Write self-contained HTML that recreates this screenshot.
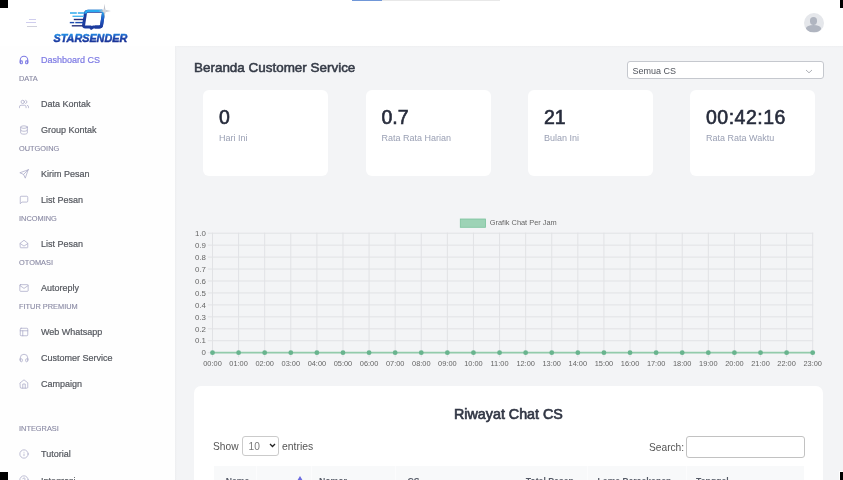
<!DOCTYPE html>
<html><head><meta charset="utf-8">
<style>
*{margin:0;padding:0;box-sizing:border-box}
html,body{width:843px;height:480px;overflow:hidden;background:#f3f4f6;will-change:transform;font-family:"Liberation Sans",sans-serif;position:relative}
.a{position:absolute;white-space:nowrap}
#hdr{position:absolute;left:0;top:0;width:843px;height:46px;background:#fff}
#side{position:absolute;left:0;top:46px;width:175px;height:434px;background:#fefefe}
.it{position:absolute;left:41px;font-size:9px;color:#55585f;-webkit-text-stroke:0.2px currentColor;line-height:10px}
.lb{position:absolute;left:19px;font-size:7.4px;color:#8a8aa4;line-height:8px;font-weight:normal;-webkit-text-stroke:0.12px #8a8aa4;margin-top:0.7px}
.ic{position:absolute;left:19px;width:10px;height:10px;margin-top:-0.5px}
.ic svg{width:10px;height:10px;display:block}
.card{position:absolute;top:89.5px;width:125px;height:86px;background:#fff;border-radius:6px}
.num{position:absolute;left:16px;top:17px;font-size:19.5px;font-weight:normal;color:#262b3b;-webkit-text-stroke:0.6px #262b3b;letter-spacing:0;line-height:20px}
.sub{position:absolute;left:16px;top:43.1px;font-size:9px;color:#9aa0b4;line-height:10px}
.th{top:475.8px;font-size:8.7px;font-weight:bold;color:#555a66;line-height:10px}
.corner{position:absolute;background:#000}
</style></head><body>
<div id="hdr"></div>
<div class="a" style="left:0;top:46px;width:843px;height:2px;background:linear-gradient(#eeeff1,#f3f4f6)"></div>
<div id="side"></div>
<div class="a" style="left:175px;top:46px;width:2px;height:434px;background:linear-gradient(90deg,#edeef0,#f3f4f6)"></div>

<!-- progress bar -->
<div class="a" style="left:352px;top:0;width:148px;height:1px;background:#e8e8e8"></div>
<div class="a" style="left:352px;top:0;width:29.5px;height:1px;background:#7097d8"></div>

<!-- logo -->
<svg class="a" style="left:50px;top:0" width="85" height="46" viewBox="50 0 85 46">
<defs>
<linearGradient id="lg2" x1="0" y1="0" x2="0.15" y2="1"><stop offset="0" stop-color="#22b0f2"/><stop offset="0.3" stop-color="#1f86e0"/><stop offset="0.55" stop-color="#1c4cb4"/><stop offset="1" stop-color="#1a2f92"/></linearGradient>
<linearGradient id="lg3" x1="0" y1="0" x2="0" y2="1"><stop offset="0" stop-color="#2aa9ef"/><stop offset="0.5" stop-color="#1f5cc6"/><stop offset="1" stop-color="#1b3a9e"/></linearGradient>
</defs>
<path d="M88 11.3 L101.6 11.3 Q103.7 11.3 103.4 13.4 L101.6 25 Q101.3 27 99.2 27 L93.2 27 L91.2 28.3 L90.7 27 L85.4 27 Q83.3 27 83.6 25 L85.4 13.4 Q85.8 11.3 88 11.3 Z" fill="#fff" stroke="#1d3c9e" stroke-width="3" stroke-linejoin="round"/>
<path d="M101.6 11.3 Q103.7 11.3 103.4 13.4 L101.6 25 Q101.3 27 99.2 27 L95 27" fill="none" stroke="url(#lg3)" stroke-width="3" stroke-linejoin="round"/>
<path d="M85.9 12.6 Q86.2 10.9 88.2 10.9 L101.8 10.9" fill="none" stroke="#2aaaf0" stroke-width="2.2" stroke-linecap="round"/>
<rect x="70" y="12.3" width="6.8" height="1.4" fill="#22a4ec"/><rect x="77.8" y="12.3" width="7" height="1.4" fill="#22a4ec"/>
<rect x="72.5" y="15.6" width="11.5" height="1.4" fill="#45b4f0"/>
<rect x="73.8" y="18.8" width="10" height="1.4" fill="#24307a"/>
<rect x="69.8" y="21.9" width="4.4" height="1.4" fill="#1d4cb0"/><rect x="75.3" y="21.9" width="8.2" height="1.4" fill="#1d4cb0"/>
<rect x="71.8" y="25.1" width="11.5" height="1.4" fill="#24307c"/>
<path d="M104.5 3.8 L105.4 10.1 L111 11 L105.4 11.9 L104.5 17.8 L103.6 11.9 L98.5 11 L103.6 10.1 Z" fill="#bfc2cb"/>
<circle cx="104.5" cy="11" r="1.8" fill="#d4d6dc"/>
<text x="53.6" y="41.6" font-family="Liberation Sans" font-weight="bold" font-style="italic" font-size="11.7" fill="url(#lg2)" stroke="url(#lg2)" stroke-width="0.5" transform="translate(53.6 0) scale(0.925 1) translate(-53.6 0)">STARSENDER</text>
</svg>

<!-- hamburger -->
<div class="a" style="left:29.2px;top:18.8px;width:7.2px;height:1px;background:#cfcdee"></div>
<div class="a" style="left:25.7px;top:22.4px;width:10.7px;height:1px;background:#cfcdee"></div>
<div class="a" style="left:26.7px;top:26.1px;width:10.2px;height:1px;background:#d0d0dc"></div>

<!-- avatar -->
<div class="a" style="left:803.6px;top:12.8px;width:20.4px;height:20.4px;border-radius:50%;background:#e5e7eb;overflow:hidden">
  <div class="a" style="left:6.2px;top:4.2px;width:7.6px;height:8.2px;border-radius:45%;background:#b0b5c0"></div>
  <div class="a" style="left:2.4px;top:12.6px;width:15.4px;height:6.6px;border-radius:50% 50% 45% 45%;background:#b0b5c0"></div>
</div>

<!-- sidebar items -->
<div class="ic" style="top:55px"><svg viewBox="0 0 24 24" fill="none" stroke="#7d7ae4" stroke-width="2.6" stroke-linecap="round" stroke-linejoin="round"><path d="M3 18v-6a9 9 0 0 1 18 0v6"/><path d="M21 19a2 2 0 0 1-2 2h-1a2 2 0 0 1-2-2v-3a2 2 0 0 1 2-2h3zM3 19a2 2 0 0 0 2 2h1a2 2 0 0 0 2-2v-3a2 2 0 0 0-2-2H3z"/></svg></div>
<div class="it" style="top:55px;color:#7d7ae4">Dashboard CS</div>
<div class="lb" style="top:74px">DATA</div>

<div class="ic" style="top:99px"><svg viewBox="0 0 24 24" fill="none" stroke="#a9a9c6" stroke-width="1.8" stroke-linecap="round" stroke-linejoin="round"><path d="M17 21v-2a4 4 0 0 0-4-4H5a4 4 0 0 0-4 4v2"/><circle cx="9" cy="7" r="4"/><path d="M23 21v-2a4 4 0 0 0-3-3.87M16 3.13a4 4 0 0 1 0 7.75"/></svg></div>
<div class="it" style="top:99px">Data Kontak</div>
<div class="ic" style="top:125px"><svg viewBox="0 0 24 24" fill="none" stroke="#a9a9c6" stroke-width="1.8" stroke-linecap="round" stroke-linejoin="round"><ellipse cx="12" cy="5" rx="8" ry="3"/><path d="M20 12c0 1.66-3.58 3-8 3s-8-1.34-8-3"/><path d="M4 5v14c0 1.66 3.58 3 8 3s8-1.34 8-3V5"/></svg></div>
<div class="it" style="top:125px">Group Kontak</div>
<div class="lb" style="top:144px">OUTGOING</div>

<div class="ic" style="top:169px"><svg viewBox="0 0 24 24" fill="none" stroke="#a9a9c6" stroke-width="1.8" stroke-linecap="round" stroke-linejoin="round"><path d="M22 2L11 13"/><path d="M22 2l-7 20-4-9-9-4 20-7z"/></svg></div>
<div class="it" style="top:169px">Kirim Pesan</div>
<div class="ic" style="top:195px"><svg viewBox="0 0 24 24" fill="none" stroke="#a9a9c6" stroke-width="1.8" stroke-linecap="round" stroke-linejoin="round"><path d="M21 15a2 2 0 0 1-2 2H7l-4 4V5a2 2 0 0 1 2-2h14a2 2 0 0 1 2 2z"/></svg></div>
<div class="it" style="top:195px">List Pesan</div>
<div class="lb" style="top:214px">INCOMING</div>

<div class="ic" style="top:239px"><svg viewBox="0 0 24 24" fill="none" stroke="#a9a9c6" stroke-width="1.8" stroke-linecap="round" stroke-linejoin="round"><path d="M3 10l9-7 9 7v10a1 1 0 0 1-1 1H4a1 1 0 0 1-1-1z"/><path d="M3 11l9 6 9-6"/></svg></div>
<div class="it" style="top:239px">List Pesan</div>
<div class="lb" style="top:258px">OTOMASI</div>

<div class="ic" style="top:283px"><svg viewBox="0 0 24 24" fill="none" stroke="#a9a9c6" stroke-width="1.8" stroke-linecap="round" stroke-linejoin="round"><rect x="2" y="4" width="20" height="16" rx="2"/><path d="M22 6l-10 7L2 6"/></svg></div>
<div class="it" style="top:283px">Autoreply</div>
<div class="lb" style="top:302px">FITUR PREMIUM</div>

<div class="ic" style="top:327px"><svg viewBox="0 0 24 24" fill="none" stroke="#a9a9c6" stroke-width="1.8" stroke-linecap="round" stroke-linejoin="round"><rect x="3" y="3" width="18" height="18" rx="2"/><path d="M3 9h18M9 21V9"/></svg></div>
<div class="it" style="top:327px">Web Whatsapp</div>
<div class="ic" style="top:353px"><svg viewBox="0 0 24 24" fill="none" stroke="#a9a9c6" stroke-width="1.8" stroke-linecap="round" stroke-linejoin="round"><path d="M3 18v-6a9 9 0 0 1 18 0v6"/><path d="M21 19a2 2 0 0 1-2 2h-1a2 2 0 0 1-2-2v-3a2 2 0 0 1 2-2h3zM3 19a2 2 0 0 0 2 2h1a2 2 0 0 0 2-2v-3a2 2 0 0 0-2-2H3z"/></svg></div>
<div class="it" style="top:353px">Customer Service</div>
<div class="ic" style="top:379px"><svg viewBox="0 0 24 24" fill="none" stroke="#a9a9c6" stroke-width="1.8" stroke-linecap="round" stroke-linejoin="round"><path d="M3 9l9-7 9 7v11a2 2 0 0 1-2 2H5a2 2 0 0 1-2-2z"/><path d="M9 22V12h6v10"/></svg></div>
<div class="it" style="top:379px">Campaign</div>
<div class="lb" style="top:424px">INTEGRASI</div>

<div class="ic" style="top:449px"><svg viewBox="0 0 24 24" fill="none" stroke="#a9a9c6" stroke-width="1.8" stroke-linecap="round" stroke-linejoin="round"><circle cx="12" cy="12" r="10"/><path d="M12 16v-4M12 8h.01"/></svg></div>
<div class="it" style="top:449.4px">Tutorial</div>
<div class="ic" style="top:475.4px"><svg viewBox="0 0 24 24" fill="none" stroke="#a9a9c6" stroke-width="1.8" stroke-linecap="round" stroke-linejoin="round"><circle cx="12" cy="12" r="10"/><path d="M9.09 9a3 3 0 0 1 5.83 1c0 2-3 3-3 3"/></svg></div>
<div class="it" style="top:476px">Integrasi</div>

<!-- title -->
<div class="a" style="left:194px;top:61.1px;font-size:13.45px;font-weight:normal;color:#343a46;-webkit-text-stroke:0.55px #343a46;line-height:14px">Beranda Customer Service</div>

<!-- select -->
<div class="a" style="left:627px;top:61px;width:197px;height:17.5px;background:#fff;border:1px solid #c5c8ce;border-radius:3px"></div>
<div class="a" style="left:632.5px;top:65.8px;font-size:9px;color:#50545c;line-height:10px">Semua CS</div>
<svg class="a" style="left:805px;top:69px" width="8" height="5" viewBox="0 0 8 5"><path d="M1 1l3 2.8 3-2.8" fill="none" stroke="#9a9ea6" stroke-width="0.8"/></svg>

<!-- cards -->
<div class="card" style="left:203px"><div class="num">0</div><div class="sub">Hari Ini</div></div>
<div class="card" style="left:365.5px"><div class="num">0.7</div><div class="sub">Rata Rata Harian</div></div>
<div class="card" style="left:528px"><div class="num">21</div><div class="sub">Bulan Ini</div></div>
<div class="card" style="left:690px"><div class="num" style="letter-spacing:0.5px">00:42:16</div><div class="sub">Rata Rata Waktu</div></div>

<!-- chart -->
<svg class="a" style="left:0;top:0" width="843" height="480" viewBox="0 0 843 480">
<line x1="207.8" y1="233.20" x2="813.20" y2="233.20" stroke="#e1e2e5" stroke-width="1"/>
<line x1="207.8" y1="245.15" x2="813.20" y2="245.15" stroke="#e1e2e5" stroke-width="1"/>
<line x1="207.8" y1="257.10" x2="813.20" y2="257.10" stroke="#e1e2e5" stroke-width="1"/>
<line x1="207.8" y1="269.05" x2="813.20" y2="269.05" stroke="#e1e2e5" stroke-width="1"/>
<line x1="207.8" y1="281.00" x2="813.20" y2="281.00" stroke="#e1e2e5" stroke-width="1"/>
<line x1="207.8" y1="292.95" x2="813.20" y2="292.95" stroke="#e1e2e5" stroke-width="1"/>
<line x1="207.8" y1="304.90" x2="813.20" y2="304.90" stroke="#e1e2e5" stroke-width="1"/>
<line x1="207.8" y1="316.85" x2="813.20" y2="316.85" stroke="#e1e2e5" stroke-width="1"/>
<line x1="207.8" y1="328.80" x2="813.20" y2="328.80" stroke="#e1e2e5" stroke-width="1"/>
<line x1="207.8" y1="340.75" x2="813.20" y2="340.75" stroke="#e1e2e5" stroke-width="1"/>
<line x1="207.8" y1="352.70" x2="813.20" y2="352.70" stroke="#e1e2e5" stroke-width="1"/>
<line x1="212.50" y1="232.70" x2="212.50" y2="357.20" stroke="#e1e2e5" stroke-width="1"/>
<line x1="238.60" y1="232.70" x2="238.60" y2="357.20" stroke="#e1e2e5" stroke-width="1"/>
<line x1="264.69" y1="232.70" x2="264.69" y2="357.20" stroke="#e1e2e5" stroke-width="1"/>
<line x1="290.79" y1="232.70" x2="290.79" y2="357.20" stroke="#e1e2e5" stroke-width="1"/>
<line x1="316.88" y1="232.70" x2="316.88" y2="357.20" stroke="#e1e2e5" stroke-width="1"/>
<line x1="342.98" y1="232.70" x2="342.98" y2="357.20" stroke="#e1e2e5" stroke-width="1"/>
<line x1="369.07" y1="232.70" x2="369.07" y2="357.20" stroke="#e1e2e5" stroke-width="1"/>
<line x1="395.17" y1="232.70" x2="395.17" y2="357.20" stroke="#e1e2e5" stroke-width="1"/>
<line x1="421.27" y1="232.70" x2="421.27" y2="357.20" stroke="#e1e2e5" stroke-width="1"/>
<line x1="447.36" y1="232.70" x2="447.36" y2="357.20" stroke="#e1e2e5" stroke-width="1"/>
<line x1="473.46" y1="232.70" x2="473.46" y2="357.20" stroke="#e1e2e5" stroke-width="1"/>
<line x1="499.55" y1="232.70" x2="499.55" y2="357.20" stroke="#e1e2e5" stroke-width="1"/>
<line x1="525.65" y1="232.70" x2="525.65" y2="357.20" stroke="#e1e2e5" stroke-width="1"/>
<line x1="551.74" y1="232.70" x2="551.74" y2="357.20" stroke="#e1e2e5" stroke-width="1"/>
<line x1="577.84" y1="232.70" x2="577.84" y2="357.20" stroke="#e1e2e5" stroke-width="1"/>
<line x1="603.93" y1="232.70" x2="603.93" y2="357.20" stroke="#e1e2e5" stroke-width="1"/>
<line x1="630.03" y1="232.70" x2="630.03" y2="357.20" stroke="#e1e2e5" stroke-width="1"/>
<line x1="656.13" y1="232.70" x2="656.13" y2="357.20" stroke="#e1e2e5" stroke-width="1"/>
<line x1="682.22" y1="232.70" x2="682.22" y2="357.20" stroke="#e1e2e5" stroke-width="1"/>
<line x1="708.32" y1="232.70" x2="708.32" y2="357.20" stroke="#e1e2e5" stroke-width="1"/>
<line x1="734.41" y1="232.70" x2="734.41" y2="357.20" stroke="#e1e2e5" stroke-width="1"/>
<line x1="760.51" y1="232.70" x2="760.51" y2="357.20" stroke="#e1e2e5" stroke-width="1"/>
<line x1="786.60" y1="232.70" x2="786.60" y2="357.20" stroke="#e1e2e5" stroke-width="1"/>
<line x1="812.70" y1="232.70" x2="812.70" y2="357.20" stroke="#e1e2e5" stroke-width="1"/>
<text x="206" y="235.90" text-anchor="end" font-size="7.9" fill="#666" font-family="Liberation Sans">1.0</text>
<text x="206" y="247.85" text-anchor="end" font-size="7.9" fill="#666" font-family="Liberation Sans">0.9</text>
<text x="206" y="259.80" text-anchor="end" font-size="7.9" fill="#666" font-family="Liberation Sans">0.8</text>
<text x="206" y="271.75" text-anchor="end" font-size="7.9" fill="#666" font-family="Liberation Sans">0.7</text>
<text x="206" y="283.70" text-anchor="end" font-size="7.9" fill="#666" font-family="Liberation Sans">0.6</text>
<text x="206" y="295.65" text-anchor="end" font-size="7.9" fill="#666" font-family="Liberation Sans">0.5</text>
<text x="206" y="307.60" text-anchor="end" font-size="7.9" fill="#666" font-family="Liberation Sans">0.4</text>
<text x="206" y="319.55" text-anchor="end" font-size="7.9" fill="#666" font-family="Liberation Sans">0.3</text>
<text x="206" y="331.50" text-anchor="end" font-size="7.9" fill="#666" font-family="Liberation Sans">0.2</text>
<text x="206" y="343.45" text-anchor="end" font-size="7.9" fill="#666" font-family="Liberation Sans">0.1</text>
<text x="206" y="355.40" text-anchor="end" font-size="7.9" fill="#666" font-family="Liberation Sans">0</text>
<text x="212.50" y="365.9" text-anchor="middle" font-size="7.4" fill="#666" font-family="Liberation Sans">00:00</text>
<text x="238.60" y="365.9" text-anchor="middle" font-size="7.4" fill="#666" font-family="Liberation Sans">01:00</text>
<text x="264.69" y="365.9" text-anchor="middle" font-size="7.4" fill="#666" font-family="Liberation Sans">02:00</text>
<text x="290.79" y="365.9" text-anchor="middle" font-size="7.4" fill="#666" font-family="Liberation Sans">03:00</text>
<text x="316.88" y="365.9" text-anchor="middle" font-size="7.4" fill="#666" font-family="Liberation Sans">04:00</text>
<text x="342.98" y="365.9" text-anchor="middle" font-size="7.4" fill="#666" font-family="Liberation Sans">05:00</text>
<text x="369.07" y="365.9" text-anchor="middle" font-size="7.4" fill="#666" font-family="Liberation Sans">06:00</text>
<text x="395.17" y="365.9" text-anchor="middle" font-size="7.4" fill="#666" font-family="Liberation Sans">07:00</text>
<text x="421.27" y="365.9" text-anchor="middle" font-size="7.4" fill="#666" font-family="Liberation Sans">08:00</text>
<text x="447.36" y="365.9" text-anchor="middle" font-size="7.4" fill="#666" font-family="Liberation Sans">09:00</text>
<text x="473.46" y="365.9" text-anchor="middle" font-size="7.4" fill="#666" font-family="Liberation Sans">10:00</text>
<text x="499.55" y="365.9" text-anchor="middle" font-size="7.4" fill="#666" font-family="Liberation Sans">11:00</text>
<text x="525.65" y="365.9" text-anchor="middle" font-size="7.4" fill="#666" font-family="Liberation Sans">12:00</text>
<text x="551.74" y="365.9" text-anchor="middle" font-size="7.4" fill="#666" font-family="Liberation Sans">13:00</text>
<text x="577.84" y="365.9" text-anchor="middle" font-size="7.4" fill="#666" font-family="Liberation Sans">14:00</text>
<text x="603.93" y="365.9" text-anchor="middle" font-size="7.4" fill="#666" font-family="Liberation Sans">15:00</text>
<text x="630.03" y="365.9" text-anchor="middle" font-size="7.4" fill="#666" font-family="Liberation Sans">16:00</text>
<text x="656.13" y="365.9" text-anchor="middle" font-size="7.4" fill="#666" font-family="Liberation Sans">17:00</text>
<text x="682.22" y="365.9" text-anchor="middle" font-size="7.4" fill="#666" font-family="Liberation Sans">18:00</text>
<text x="708.32" y="365.9" text-anchor="middle" font-size="7.4" fill="#666" font-family="Liberation Sans">19:00</text>
<text x="734.41" y="365.9" text-anchor="middle" font-size="7.4" fill="#666" font-family="Liberation Sans">20:00</text>
<text x="760.51" y="365.9" text-anchor="middle" font-size="7.4" fill="#666" font-family="Liberation Sans">21:00</text>
<text x="786.60" y="365.9" text-anchor="middle" font-size="7.4" fill="#666" font-family="Liberation Sans">22:00</text>
<text x="812.70" y="365.9" text-anchor="middle" font-size="7.4" fill="#666" font-family="Liberation Sans">23:00</text>
<line x1="212.50" y1="352.70" x2="812.70" y2="352.70" stroke="#92cbab" stroke-width="1.8"/>
<circle cx="212.50" cy="352.70" r="2.4" fill="#68b48e"/>
<circle cx="238.60" cy="352.70" r="2.4" fill="#68b48e"/>
<circle cx="264.69" cy="352.70" r="2.4" fill="#68b48e"/>
<circle cx="290.79" cy="352.70" r="2.4" fill="#68b48e"/>
<circle cx="316.88" cy="352.70" r="2.4" fill="#68b48e"/>
<circle cx="342.98" cy="352.70" r="2.4" fill="#68b48e"/>
<circle cx="369.07" cy="352.70" r="2.4" fill="#68b48e"/>
<circle cx="395.17" cy="352.70" r="2.4" fill="#68b48e"/>
<circle cx="421.27" cy="352.70" r="2.4" fill="#68b48e"/>
<circle cx="447.36" cy="352.70" r="2.4" fill="#68b48e"/>
<circle cx="473.46" cy="352.70" r="2.4" fill="#68b48e"/>
<circle cx="499.55" cy="352.70" r="2.4" fill="#68b48e"/>
<circle cx="525.65" cy="352.70" r="2.4" fill="#68b48e"/>
<circle cx="551.74" cy="352.70" r="2.4" fill="#68b48e"/>
<circle cx="577.84" cy="352.70" r="2.4" fill="#68b48e"/>
<circle cx="603.93" cy="352.70" r="2.4" fill="#68b48e"/>
<circle cx="630.03" cy="352.70" r="2.4" fill="#68b48e"/>
<circle cx="656.13" cy="352.70" r="2.4" fill="#68b48e"/>
<circle cx="682.22" cy="352.70" r="2.4" fill="#68b48e"/>
<circle cx="708.32" cy="352.70" r="2.4" fill="#68b48e"/>
<circle cx="734.41" cy="352.70" r="2.4" fill="#68b48e"/>
<circle cx="760.51" cy="352.70" r="2.4" fill="#68b48e"/>
<circle cx="786.60" cy="352.70" r="2.4" fill="#68b48e"/>
<circle cx="812.70" cy="352.70" r="2.4" fill="#68b48e"/>
<rect x="460.3" y="219" width="25.3" height="8.3" fill="#9dd3b6" stroke="#7cc39d" stroke-width="0.8"/>
<text x="489.8" y="225.4" font-size="7.4" fill="#666" font-family="Liberation Sans">Grafik Chat Per Jam</text>
</svg>
<!-- table card -->
<div class="a" style="left:194px;top:385.5px;width:629px;height:120px;background:#fff;border-radius:7px"></div>
<div class="a" style="left:454px;top:405.5px;font-size:14.3px;font-weight:normal;-webkit-text-stroke:0.65px #313644;color:#313644;line-height:16px">Riwayat Chat CS</div>
<div class="a" style="left:213px;top:440.8px;font-size:10.2px;color:#555;line-height:12px">Show</div>
<div class="a" style="left:241.7px;top:436.3px;width:37px;height:19.3px;border:1px solid #cbcbcb;border-radius:3px;background:#fff"></div>
<div class="a" style="left:248.5px;top:440.8px;font-size:10.2px;color:#7a7a7a;line-height:12px">10</div>
<svg class="a" style="left:269px;top:443px" width="7" height="5" viewBox="0 0 7 5"><path d="M1 1l2.5 2.5L6 1" fill="none" stroke="#222" stroke-width="1.3"/></svg>
<div class="a" style="left:282px;top:440.8px;font-size:10.4px;color:#555;line-height:12px">entries</div>
<div class="a" style="left:649px;top:442px;font-size:10.2px;color:#555;line-height:12px">Search:</div>
<div class="a" style="left:686px;top:436.3px;width:119px;height:22px;border:1px solid #c2c2c2;border-radius:3px;background:#fff"></div>
<div class="a" style="left:213.5px;top:465.5px;width:590.5px;height:20px;background:#f8f9fa"></div>

<div class="a" style="left:255.5px;top:465.5px;width:1px;height:15px;background:#fcfcfd"></div>
<div class="a" style="left:310.5px;top:465.5px;width:1px;height:15px;background:#fcfcfd"></div>
<div class="a" style="left:394.5px;top:465.5px;width:1px;height:15px;background:#fcfcfd"></div>
<div class="a" style="left:587px;top:465.5px;width:1px;height:15px;background:#fcfcfd"></div>
<div class="a" style="left:686px;top:465.5px;width:1px;height:15px;background:#fcfcfd"></div>
<div class="th a" style="left:225.7px">Nama</div>
<svg class="a" style="left:297.3px;top:475.5px" width="6" height="5" viewBox="0 0 6 5"><path d="M3 0L6 5H0z" fill="#6b6be0"/></svg>
<div class="th a" style="left:319px">Nomor</div>
<div class="th a" style="left:407.4px">CS</div>
<div class="th a" style="left:525.7px">Total Pesan</div>
<div class="th a" style="left:597.5px">Lama Percakapan</div>
<div class="th a" style="left:696px">Tanggal</div>

<!-- corners -->
<div class="corner" style="left:0;top:0;width:8px;height:8px"></div>
<div class="corner" style="left:840px;top:0;width:3px;height:8px"></div>
<div class="corner" style="left:0;top:472px;width:8px;height:8px"></div>
<div class="a" style="left:839px;top:471px;width:4px;height:9px;background:#fff"></div>
<div class="corner" style="left:840px;top:472px;width:3px;height:8px"></div>
</body></html>
